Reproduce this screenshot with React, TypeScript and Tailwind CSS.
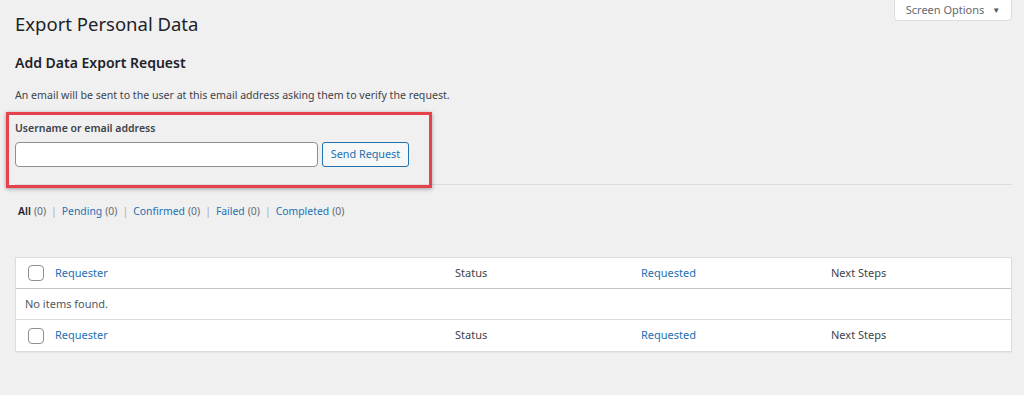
const cols = [
  { label: "Status", link: false, w: "w-[186px]" },
  { label: "Requested", link: true, w: "w-[190px]" },
  { label: "Next Steps", link: false, w: "flex-1" },
];

function HeaderRow({ border }: { border: string }) {
  return (
    <div className={`flex items-center h-[31px] pl-[12px] ${border}`}>
      <span className="block w-4 h-4 rounded-[4px] border border-[#8c8f94] bg-white" />
      <a className="ml-[11px] w-[400px] text-[#2271b1]">Requester</a>
      {cols.map((c) => (
        <span
          key={c.label}
          className={`${c.w} ${c.link ? "text-[#2271b1]" : "text-[#3c434a]"}`}
        >
          {c.label}
        </span>
      ))}
    </div>
  );
}

const filters = ["Pending", "Confirmed", "Failed", "Completed"];

export default function App() {
  return (
    <div className="min-h-[395px] bg-[#f0f0f1] pl-[15px] pr-3 text-[#3c434a] font-['Noto_Sans',sans-serif] text-[11px]">
      <div className="flex items-start justify-between">
        <h1 className="pt-[10px] text-[18.5px] leading-[28px] font-normal text-[#1d2327]">
          Export Personal Data
        </h1>
        <button className="mt-[-1px] h-[22px] w-[118px] flex items-center justify-center gap-[8px] bg-white border border-[#dcdcde] rounded-b-[4px] text-[11px] text-[#646970]">
          Screen Options
          <span className="text-[8px] leading-none text-[#50575e]">▼</span>
        </button>
      </div>

      <h2 className="mt-[15px] text-[14px] leading-[20px] font-semibold text-[#1d2327]">
        Add Data Export Request
      </h2>
      <p className="mt-[14px] leading-[16px] text-[10.6px]">
        An email will be sent to the user at this email address asking them to verify the request.
      </p>

      <div className="relative">
        <div className="pt-[17px]">
          <label className="block font-semibold text-[10.5px] text-[#3c434a] leading-[16px]">
            Username or email address
          </label>
          <div className="mt-[6px] flex gap-[4px]">
            <input
              type="text"
              className="w-[303px] h-[25px] bg-white border border-[#8c8f94] rounded-[4px] outline-none"
            />
            <button className="w-[87px] h-[25px] bg-[#f6f7f7] border border-[#2271b1] rounded-[3px] text-[#2271b1] text-[10.8px]">
              Send Request
            </button>
          </div>
          <div className="mt-[17px] h-px bg-[#dcdcde]" />
        </div>
        <div className="absolute left-[-9px] top-[9px] w-[426px] h-[76px] border-[3px] border-[#e5424b] shadow-[0_1px_4px_rgba(0,0,0,0.35)] pointer-events-none" />
      </div>

      <div className="mt-[18px] ml-[3px] flex items-center text-[10.4px] leading-[16px]">
        <span className="font-semibold text-[#1d2327]">All</span>
        <span className="ml-[3px] text-[#646970]">(0)</span>
        {filters.map((f) => (
          <span key={f} className="flex items-center">
            <span className="mx-[5px] text-[#a7aaad]">|</span>
            <a className="text-[#2271b1]">{f}</a>
            <span className="ml-[3px] text-[#646970]">(0)</span>
          </span>
        ))}
      </div>

      <div className="mt-[38px] bg-white border border-[#dcdcde] shadow-[0_1px_1px_rgba(0,0,0,0.04)]">
        <HeaderRow border="border-b border-[#c3c4c7]" />
        <div className="h-[31px] flex items-center pl-[9px] border-b border-[#dcdcde] text-[#50575e]">
          No items found.
        </div>
        <HeaderRow border="" />
      </div>
    </div>
  );
}
